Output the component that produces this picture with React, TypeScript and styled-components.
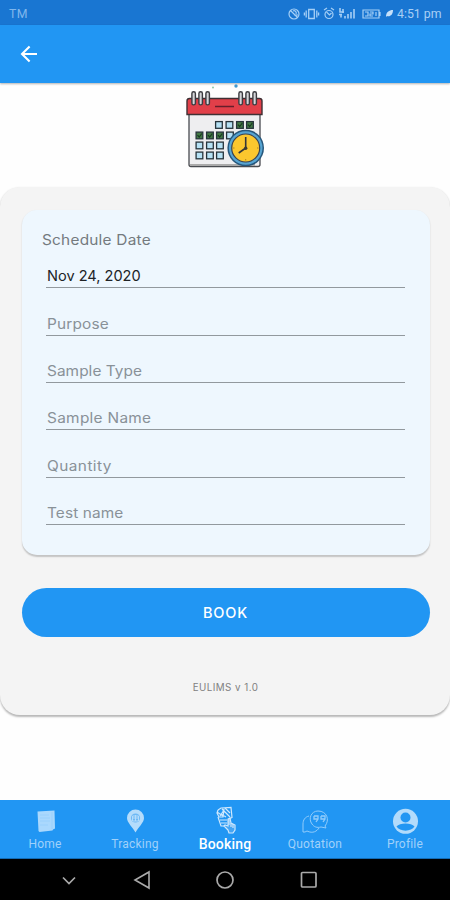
import React from 'react';
import styled, { createGlobalStyle } from 'styled-components';

const GlobalStyle = createGlobalStyle`
  * { box-sizing: border-box; }
  body { margin: 0; background: #fff; }
  svg { display: block; flex: none; }
`;

const Screen = styled.div`
  width: 450px;
  height: 900px;
  display: flex;
  flex-direction: column;
  overflow: hidden;
  background: #fefefe;
  font-family: Inter, sans-serif;
`;

const StatusBar = styled.header`
  height: 25px;
  padding: 2px 8px 0 9px;
  display: flex;
  align-items: center;
  justify-content: space-between;
  background: #1976d2;
  color: #a9d0f5;
  font: 12.3px/22px Roboto, sans-serif;
`;

const Carrier = styled.span`
  color: #80b7ec;
  letter-spacing: 0.3px;
`;

const StatusRight = styled.div`
  display: flex;
  align-items: center;
`;

const Clock = styled.time`
  width: 45px;
  white-space: nowrap;
`;

const AppBar = styled.nav`
  height: 58px;
  padding-left: 20px;
  display: flex;
  align-items: center;
  background: #2196f3;
  box-shadow: 0 1px 2px rgba(0, 0, 0, 0.3);
`;

const BackButton = styled.button`
  padding: 0;
  border: 0;
  background: none;
`;

const Hero = styled.div`
  height: 104px;
  display: flex;
  justify-content: center;
`;

const Panel = styled.main`
  height: 528px;
  padding: 23px 20.5px 0 21.5px;
  border-radius: 20px;
  background: #f4f4f4;
  box-shadow: 0 1.5px 2px rgba(0, 0, 0, 0.28);
  display: flex;
  flex-direction: column;
`;

const FormCard = styled.form`
  height: 345px;
  padding: 19px 25px 0 24.5px;
  border-radius: 15px;
  background: #eef7fe;
  box-shadow: 0 1.5px 1.5px rgba(0, 0, 0, 0.2);
`;

const WideText = styled.span<{ $stretch: number; $spacing: number }>`
  display: inline-block;
  white-space: nowrap;
  transform: scaleX(${({ $stretch }) => $stretch});
  transform-origin: left;
  letter-spacing: ${({ $spacing }) => $spacing}px;
`;

const FormLabel = styled.div`
  height: 22px;
  margin-left: -4px;
  color: #747a7e;
  font-size: 14px;
  line-height: 22px;
`;

const Field = styled.div<{ $filled?: boolean }>`
  height: 47.4px;
  padding: 0 0 2px 0.5px;
  display: flex;
  align-items: flex-end;
  border-bottom: 1px solid #92999e;
  color: ${({ $filled }) => ($filled ? '#202326' : '#899198')};
  font-size: 14px;
  line-height: 19px;
`;

const Fields = styled.div`
  & > :first-child { height: 37.2px; }
`;

const BookButton = styled.button`
  height: 49px;
  margin-top: 33px;
  border: 0;
  border-radius: 25px;
  background: #2196f3;
  color: #fff;
  font: 500 14.5px Inter, sans-serif;
  letter-spacing: 0.8px;
`;

const Version = styled.div`
  margin-top: 43px;
  color: #818181;
  font-size: 9.8px;
  line-height: 16px;
  text-align: center;
  letter-spacing: 0.45px;
`;

const Tabs = styled.nav`
  height: 59px;
  margin-top: auto;
  display: grid;
  grid-template-columns: repeat(5, 90px);
  background: #2196f3;
  border-bottom: 1px solid #126bb5;
`;

const Tab = styled.div<{ $active?: boolean }>`
  padding-top: ${({ $active }) => ($active ? 5 : 7)}px;
  display: flex;
  flex-direction: column;
  align-items: center;
  color: ${({ $active }) => ($active ? '#fff' : '#a0d1fa')};
  font: ${({ $active }) => ($active ? '500 14px/20px' : '400 12px/20px')} Roboto, sans-serif;
  letter-spacing: 0.2px;
  & > span { margin-top: -1px; }
`;

const SystemBar = styled.footer`
  height: 41px;
  padding-left: 38px;
  display: grid;
  grid-template-columns: 62px repeat(3, 83.5px);
  align-items: center;
  justify-items: center;
  background: #000;
`;

const StatusIcons = () => (
  <svg width="109" height="16" viewBox="0 0 109 16" fill="none" stroke="#a5cff6" strokeWidth="1.2">
    <circle cx="6" cy="8" r="5" />
    <path d="M2.5 4.5l7 7M5 5c2-1 4 1 3 3M6 9h4" />
    <path d="M20.7 3.5h5.6v9h-5.6zM18.2 4.5v7M28.8 4.5v7M16.4 6.5v3M30.6 6.5v3" strokeWidth="1.3" />
    <circle cx="41" cy="8.5" r="4" />
    <path d="M36 4l3-2M46 4l-3-2M38.5 6l3 3 2-2" />
    <path d="M52 2v4h4M55 3v4M51 8.5h3M53 8.5v3M57 12.5V10M60 12.5V8M63 12.5V6M66 12.5V3" strokeWidth="1.6" />
    <path d="M75 4h16v8H75zM92 6v4" />
    <path d="M77 6h3v4h-3M82 6h3v2h-3v2h3M88 6v4" />
    <path d="M98 11c0-5 3-7 7-7 0 5-3 7-6 6z" fill="#c6e1fa" stroke="none" />
  </svg>
);

const BackIcon = () => (
  <svg width="18" height="18" viewBox="0 0 18 18" fill="none" stroke="#fff" strokeWidth="2.1">
    <path d="M17 9H2M9.6 1.4L2 9l7.6 7.6" />
  </svg>
);

const days = [
  [215, 124, 0], [225.5, 124, 0], [236, 124, 1], [246, 124, 1],
  [195.5, 134.5, 1], [206, 134.5, 1], [216, 134.5, 1], [226, 134.5, 0],
  [195.5, 144.5, 0], [206, 144.5, 0], [216, 144.5, 0],
  [195.5, 154.5, 0], [206, 154.5, 0], [216, 154.5, 0],
];

const CalendarIcon = () => (
  <svg width="84" height="86" viewBox="183 83 84 86">
    <circle cx="213" cy="87.5" r="1" fill="#8fc8a4" />
    <circle cx="236" cy="86" r="1.7" fill="#4098cf" />
    <rect x="189" y="108" width="71" height="58.5" rx="2" fill="#eeeef0" stroke="#494b50" strokeWidth="1.3" />
    <path d="M190 165h65" stroke="#aaa" strokeWidth="2" />
    <path d="M189.5 98.5h70q2.5 0 2.5 2.5v13.5h-75V101q0-2.5 2.5-2.5z" fill="#e13f49" stroke="#3f3034" strokeWidth="1.4" />
    <path d="M215 106.5h19" stroke="#651e2b" strokeWidth="1.5" />
    {[193.5, 200.5, 207.5, 240.5, 247.5, 254.5].map((x) => (
      <rect key={x} x={x - 1.6} y="91.7" width="3.5" height="13.2" rx="1.7" fill="#d4d5d8" stroke="#3b3b40" strokeWidth="1.4" />
    ))}
    {days.map(([x, y, checked]) => (
      <g key={`${x}-${y}`} transform={`translate(${x} ${y - 3})`}>
        <rect x=".6" y=".6" width="6.7" height="6.7" fill={checked ? '#437a45' : '#b6e1f4'} stroke="#26343b" strokeWidth="1.3" />
        {checked ? <path d="M2 3.7l1.7 1.8L6.3 2" fill="none" stroke="#183b20" strokeWidth="1.2" /> : null}
      </g>
    ))}
    <circle cx="245.7" cy="148" r="18.3" fill="#27577b" />
    <circle cx="245.7" cy="148" r="16.8" fill="#56a4d2" />
    <circle cx="245.7" cy="148" r="14" fill="#fbc72e" stroke="#394252" strokeWidth="1.2" />
    <path d="M245.7 137v11l-7 5" fill="none" stroke="#343638" strokeWidth="1.6" />
    <circle cx="245.7" cy="148.3" r="1.7" fill="#3b3a32" />
    <path d="M257 148h1.5M245.7 159v1.5M233 148h1.5" stroke="#b08424" />
  </svg>
);

const HomeIcon = () => (
  <svg width="28" height="28" viewBox="0 0 28 28">
    <path d="M6.5 4.5l17-1 .5 18-2 1-.5 1-13 1.5-1-1z" fill="#aad8fd" />
    <path d="M9 8h9M9 11h10M9 14h10M9 18h8M21 5v17" stroke="#98cffb" strokeWidth=".8" />
  </svg>
);

const TrackingIcon = () => (
  <svg width="28" height="28" viewBox="0 0 28 28">
    <path d="M14.5 25.5C11.5 20 6 15.5 6 11a8.5 8.5 0 0117 0c0 4.5-5.5 9-8.5 14.5z" fill="#b5dcfb" />
    <circle cx="14.5" cy="11" r="4.6" fill="#6db8f5" />
    <path d="M11.5 9h6v5h-6zM14.5 8v6M11.5 11h6" fill="none" stroke="#b5dcfb" />
  </svg>
);

const BookingIcon = () => (
  <svg width="30" height="30" viewBox="0 0 30 30" fill="none" stroke="#cfe8fd" strokeWidth="1.2">
    <path d="M8 5l3-2 10-.5 1 10-2 1M8 5l-1 3 2 4h4l1-8M12 4l8 8M15 3l5 5M11 9l5 3M7 7l6 4M14 5l-4 6" />
    <path d="M8 12l3 9h5M10 15h7M11 18h6" />
    <path d="M18 25l-4-4 1-1 3 1v-7l2-1 1 5 4 2v5l-2 3h-4z" fill="#45a5f3" />
    <path d="M19 14v6M21 18v4M23 19v4" />
  </svg>
);

const QuotationIcon = () => (
  <svg width="30" height="28" viewBox="0 0 30 28" fill="none" stroke="#92ccfb" strokeWidth="1">
    <path d="M9 9c-4 1-6 4-6 8v8h2l2-1c6 3 10 0 12-3" />
    <path d="M12 17c-4-5-1-13 6-13 9 0 12 9 7 15l1 2-5-1c-4 1-7 0-9-3z" />
    <path d="M14 9h4v3l-2 3M14 9v3h4M21 9h4v3l-2 3M21 9v3h4" strokeWidth="1.3" />
  </svg>
);

const ProfileIcon = () => (
  <svg width="28" height="28" viewBox="0 0 28 28">
    <circle cx="14.5" cy="14.3" r="12.5" fill="#b2dbfb" />
    <circle cx="14.5" cy="10.5" r="5" fill="#2196f3" />
    <path d="M5.5 19.5c3-4 15-4 18 0-3 5.5-15 5.5-18 0z" fill="#2196f3" />
  </svg>
);

const tabs = [
  { name: 'Home', Icon: HomeIcon },
  { name: 'Tracking', Icon: TrackingIcon },
  { name: 'Booking', Icon: BookingIcon, active: true },
  { name: 'Quotation', Icon: QuotationIcon },
  { name: 'Profile', Icon: ProfileIcon },
];

const fields = [
  { text: 'Nov 24, 2020', filled: true, stretch: 1.04, spacing: 0 },
  { text: 'Purpose', stretch: 1.1, spacing: 0.15 },
  { text: 'Sample Type', stretch: 1.1, spacing: 0.04 },
  { text: 'Sample Name', stretch: 1.1, spacing: 0.26 },
  { text: 'Quantity', stretch: 1.1, spacing: 0.4 },
  { text: 'Test name', stretch: 1.1, spacing: 0.1 },
];

export default function App() {
  return (
    <Screen>
      <GlobalStyle />
      <StatusBar>
        <Carrier>TM</Carrier>
        <StatusRight><StatusIcons /><Clock>4:51 pm</Clock></StatusRight>
      </StatusBar>
      <AppBar><BackButton aria-label="Back"><BackIcon /></BackButton></AppBar>
      <Hero><CalendarIcon /></Hero>
      <Panel>
        <FormCard>
          <FormLabel><WideText $stretch={1.1} $spacing={0.2}>Schedule Date</WideText></FormLabel>
          <Fields>
            {fields.map(({ text, filled, stretch, spacing }) => (
              <Field key={text} $filled={filled}>
                <WideText $stretch={stretch} $spacing={spacing}>{text}</WideText>
              </Field>
            ))}
          </Fields>
        </FormCard>
        <BookButton>BOOK</BookButton>
        <Version>EULIMS v 1.0</Version>
      </Panel>
      <Tabs>
        {tabs.map(({ name, Icon, active }) => (
          <Tab key={name} $active={active}><Icon /><span>{name}</span></Tab>
        ))}
      </Tabs>
      <SystemBar>
        <svg width="18" height="18" viewBox="0 0 18 18"><path d="M3 6.5l6 6 6-6" fill="none" stroke="#aaa" strokeWidth="1.7" /></svg>
        <svg width="20" height="20" viewBox="0 0 20 20"><path d="M17 2v16L3 10z" fill="none" stroke="#aaa" strokeWidth="1.6" /></svg>
        <svg width="20" height="20" viewBox="0 0 20 20"><circle cx="10" cy="10" r="8" fill="none" stroke="#aaa" strokeWidth="1.7" /></svg>
        <svg width="18" height="18" viewBox="0 0 18 18"><rect x="1.5" y="1.5" width="14.5" height="14.5" rx="1" fill="none" stroke="#aaa" strokeWidth="1.7" /></svg>
      </SystemBar>
    </Screen>
  );
}
